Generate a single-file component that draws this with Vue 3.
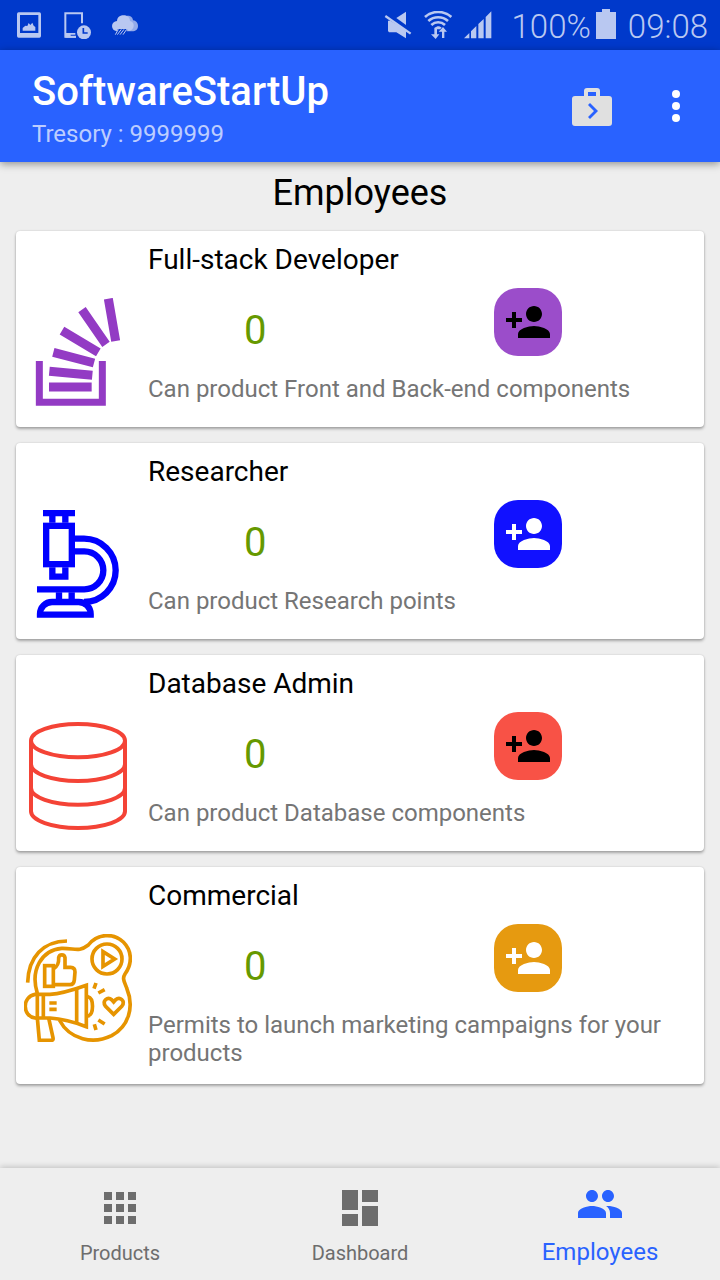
<template>
  <div class="screen">
    <div class="status-bar">
      <div class="status-group">
        <svg class="status-icon" viewBox="45 33 84 84" aria-hidden="true">
          <path fill-rule="evenodd" d="M56 37H118Q123 37 123 42V108Q123 113 118 113H56Q51 113 51 108V42Q51 37 56 37ZM60 45V99H115V45Z" />
          <path d="M68 92V84L76 77L82 78L86 69L91 75L97 68L101 77L106 81V92Z" />
        </svg>
        <svg class="status-icon" viewBox="189 33 84 84" aria-hidden="true">
          <path d="M246 70V40H196V110H228" fill="none" stroke="currentColor" stroke-width="6" />
          <path d="M196 99H226V104H212V108H228V113H196Z" />
          <circle cx="252" cy="97" r="21" />
          <path class="cut" d="M250 84V99H263" stroke-width="5" />
        </svg>
        <svg class="status-icon" viewBox="333 33 84 84" aria-hidden="true">
          <path d="M378 48C390 44 399 52 399 61C408 62 414 69 414 78C414 88 407 94 396 94H380Z" opacity=".8" />
          <path d="M350 94C341 92 336 86 336 78C336 69 343 64 351 63C352 51 361 46 371 46C383 46 390 54 390 63C399 65 402 71 401 79C400 87 394 92 386 93L381 87H354Z" />
          <path d="M355 88L346 104M364 88L352 104M372 88L360 104M380 88L369 104" stroke="currentColor" stroke-width="3" />
        </svg>
      </div>
      <div class="status-group right">
        <svg class="status-icon" viewBox="39 33 84 84" aria-hidden="true">
          <path d="M76 54L105 35V75Z" />
          <path d="M51 62H58L105 90V115L76 97H54L51 93Z" />
          <path d="M43 48L119 101" stroke="currentColor" stroke-width="7" />
        </svg>
        <svg class="status-icon" viewBox="159 33 84 84" aria-hidden="true">
          <g fill="none" stroke="currentColor" stroke-width="8">
            <path d="M162 51C184 31 219 31 241 51" />
            <path d="M172 63C189 48 214 48 231 63" />
            <path d="M181 75C193 64 210 64 222 75" />
          </g>
          <path d="M192 83C198 77 206 77 212 83L207 88H197Z" />
          <path d="M190 83H198V103H205L194 117L180 103H190ZM213 114V95H203L216 81L228 95H220V114Z" />
        </svg>
        <svg class="status-icon" viewBox="279 33 84 84" aria-hidden="true">
          <path d="M279 115L295 99V115ZM300 94L316 78V115H300ZM322 72L338 57V115H322ZM344 51L361 34V115H344Z" />
        </svg>
        <span class="battery-text">100%</span>
        <svg class="battery" viewBox="672 27 60 90" aria-hidden="true">
          <path d="M690 27H714V36H732V117H672V36H690Z" />
        </svg>
        <span class="clock">09:08</span>
      </div>
    </div>

    <header class="app-bar">
      <div class="app-title">
        <h1>SoftwareStartUp</h1>
        <p>Tresory : {{ tresory }}</p>
      </div>
      <div class="actions">
        <button type="button" class="bag" aria-label="Next week">
          <svg viewBox="0 0 24 24">
            <path fill-rule="evenodd" d="M20.500 7H16V4.500Q16 3 14.500 3H9.500Q8 3 8 4.500V7H3.500Q2 7 2 8.500V20.500Q2 22 3.500 22H20.500Q22 22 22 20.500V8.500Q22 7 20.500 7ZM10 5H14V7H10ZM11 18.500L10 17.500 13 14.500 10 11.500 11 10.500 15 14.500Z" />
          </svg>
        </button>
        <button type="button" aria-label="More options">
          <svg viewBox="0 0 24 24">
            <circle cx="12" cy="6" r="2" />
            <circle cx="12" cy="12" r="2" />
            <circle cx="12" cy="18" r="2" />
          </svg>
        </button>
      </div>
    </header>

    <main>
      <h2>Employees</h2>
      <ul class="cards">
        <li v-for="item in employees" :key="item.id" class="card" :class="item.id">
          <svg v-if="item.id === 'developer'" class="picture" viewBox="42 54 324 324" aria-hidden="true">
            <path d="M88 243V367H277V243" stroke-width="21" />
            <path d="M117 321H245M118 274L247 286M130 217L252 249M156 152L265 217M216 89L288 193M295 56L317 183" stroke-width="27" />
          </svg>
          <svg v-else-if="item.id === 'researcher'" class="picture" viewBox="42 60 324 324" stroke-width="19" aria-hidden="true">
            <path d="M99 69H195M127 78V98M166 78V98" />
            <rect x="108.500" y="107.500" width="77" height="115" />
            <path d="M127 232V260H166V232" />
            <path d="M195 146H222A95 95 0 0 1 222 336" />
            <path d="M195 184H223A57 57 0 0 1 223 298H81" />
            <path d="M147 307V328M185 307V328" />
            <path d="M90 374V372A36 36 0 0 1 126 336H206A36 36 0 0 1 242 372V374Z" />
          </svg>
          <svg v-else-if="item.id === 'database'" class="picture" viewBox="42 66 324 324" stroke-width="12" aria-hidden="true">
            <ellipse cx="204" cy="122" rx="141" ry="50" />
            <path d="M63 122V334A141 50 0 0 0 345 334V122" />
            <path d="M63 193A141 50 0 0 0 345 193M63 264A141 50 0 0 0 345 264" />
          </svg>
          <svg v-else class="picture" viewBox="42 42 324 324" stroke-width="11" aria-hidden="true">
            <path d="M53 188C55 110 100 64 171 63" />
            <path d="M82 220C60 150 95 90 155 85C195 84 205 98 235 75C262 40 310 38 340 66C366 92 368 130 345 162C336 176 343 184 350 204C374 262 355 320 305 347C250 374 180 360 148 300" />
            <circle cx="291" cy="117" r="45" />
            <path d="M279 95V139L314 117Z" />
            <rect x="104" y="137" width="26" height="62" />
            <path d="M130 147C142 140 147 132 146 113C148 102 163 102 165 113V142H182C192 142 195 147 195 156L193 180C192 190 188 194 180 194H130" />
            <path d="M82 223H120C150 222 190 210 229 196V320C190 305 150 296 120 294H82Z" />
            <path d="M82 223H75C36 230 36 288 75 294H82M100 223V294M200 207V309" />
            <path d="M229 230H234C252 234 252 284 234 288H229" />
            <path d="M118 249H140M118 268H140" />
            <path d="M82 294L88 361H124C129 361 130 358 129 353L116 294" />
            <path d="M311 283L286 258C276 243 292 228 306 240L311 246L316 240C330 228 347 243 336 258Z" />
            <path d="M258 189L252 206M265 219L284 209M253 313L258 330M265 300L284 312" />
          </svg>

          <div class="details">
            <h3>{{ item.name }}</h3>
            <div class="hire-row">
              <span class="count">{{ item.count }}</span>
              <button type="button" class="hire" :aria-label="'Hire ' + item.name" @click="item.count++">
                <svg viewBox="0 0 24 24">
                  <path d="M15 12c2.210 0 4-1.790 4-4s-1.790-4-4-4-4 1.790-4 4 1.790 4 4 4zm-9-2V7H4v3H1v2h3v3h2v-3h3v-2H6zm9 4c-2.670 0-8 1.340-8 4v2h16v-2c0-2.660-5.330-4-8-4z" />
                </svg>
              </button>
            </div>
            <p>{{ item.description }}</p>
          </div>
        </li>
      </ul>
    </main>

    <nav class="bottom-nav">
      <a v-for="tab in tabs" :key="tab.label" href="#" :class="{ 'is-active': tab.label === activeTab }" @click.prevent="activeTab = tab.label">
        <svg viewBox="0 0 24 24" aria-hidden="true">
          <path :d="tab.icon" />
        </svg>
        <span>{{ tab.label }}</span>
      </a>
    </nav>
  </div>
</template>

<script setup>
import { ref } from 'vue';

const tresory = ref(9999999);

const employees = ref([
  { id: 'developer', name: 'Full-stack Developer', count: 0, description: 'Can product Front and Back-end components' },
  { id: 'researcher', name: 'Researcher', count: 0, description: 'Can product Research points' },
  { id: 'database', name: 'Database Admin', count: 0, description: 'Can product Database components' },
  { id: 'commercial', name: 'Commercial', count: 0, description: 'Permits to launch marketing campaigns for your products' }
]);

// BOTTOM NAVIGATION

const activeTab = ref('Employees');

const tabs = [
  { label: 'Products', icon: 'M4 8h4V4H4v4zm6 12h4v-4h-4v4zm-6 0h4v-4H4v4zm0-6h4v-4H4v4zm6 0h4v-4h-4v4zm6-10v4h4V4h-4zm-6 4h4V4h-4v4zm6 6h4v-4h-4v4zm0 6h4v-4h-4v4z' },
  { label: 'Dashboard', icon: 'M3 13h8V3H3v10zm0 8h8v-6H3v6zm10 0h8V11h-8v10zm0-18v6h8V3h-8z' },
  { label: 'Employees', icon: 'M16 11c1.660 0 2.990-1.340 2.990-3S17.660 5 16 5c-1.660 0-3 1.340-3 3s1.340 3 3 3zm-8 0c1.660 0 2.990-1.340 2.990-3S9.660 5 8 5C6.340 5 5 6.340 5 8s1.340 3 3 3zm0 2c-2.330 0-7 1.170-7 3.500V19h14v-2.500c0-2.330-4.670-3.500-7-3.500zm8 0c-.29 0-.62.02-.97.05 1.160.84 1.970 1.970 1.970 3.450V19h6v-2.500c0-2.330-4.670-3.500-7-3.500z' }
];
</script>

<style>
body {
  margin: 0;
  background: #eeeeee;
}
</style>

<style scoped>
.screen {
  display: flex;
  flex-direction: column;
  min-height: 100vh;
  background: #eeeeee;
  color: #000;
  font-family: Roboto, "Liberation Sans", sans-serif;
}

h1, h2, h3, p, ul {
  margin: 0;
  padding: 0;
  font-weight: 400;
}

svg {
  display: block;
  flex-shrink: 0;
  fill: currentColor;
}

button {
  padding: 0;
  border: none;
  background: none;
  color: inherit;
  cursor: pointer;
}

/* status bar */
.status-bar {
  display: flex;
  justify-content: space-between;
  align-items: center;
  height: 50px;
  padding: 0 12px 0 15px;
  background: #0039cb;
  color: #b9c8f1;
}

.status-group {
  display: flex;
  align-items: center;
  gap: 20px;
}

.status-group.right {
  gap: 12px;
}

.status-icon {
  width: 28px;
  height: 28px;
}

.cut {
  fill: none;
  stroke: #0039cb;
}

.battery-text,
.clock {
  padding-top: 3px;
  font-size: 33px;
  font-weight: 300;
  line-height: 40px;
}

.battery-text {
  margin-left: 8px;
}

.battery {
  width: 20px;
  height: 30px;
  margin: 0 0 2px -7px;
}

/* app bar */
.app-bar {
  display: flex;
  justify-content: space-between;
  align-items: center;
  min-height: 112px;
  padding: 0 20px 0 32px;
  box-sizing: border-box;
  background: #2962ff;
  color: #fff;
  box-shadow: 0 2px 8px rgba(0, 0, 0, .4);
}

.app-title {
  padding-top: 4px;
}

.app-title h1 {
  font-size: 40px;
  font-weight: 500;
  line-height: 48px;
}

.app-title p {
  padding-top: 4px;
  font-size: 24px;
  line-height: 28px;
  color: rgba(255, 255, 255, .7);
}

.actions {
  display: flex;
  gap: 36px;
}

.actions svg {
  width: 48px;
  height: 48px;
}

.bag {
  color: #e0e0e0;
}

/* employees */
main {
  flex: 1;
  padding: 10px 16px 24px;
}

h2 {
  font-size: 36px;
  line-height: 42px;
  text-align: center;
}

.cards {
  display: flex;
  flex-direction: column;
  gap: 16px;
  margin-top: 17px;
  list-style: none;
}

.card {
  display: flex;
  align-items: flex-start;
  gap: 16px;
  min-height: 196px;
  padding: 12px 10px 17px 8px;
  box-sizing: border-box;
  border-radius: 4px;
  background: #fff;
  box-shadow: 0 2px 3px rgba(0, 0, 0, .3), 0 0 2px rgba(0, 0, 0, .15);
}

.picture {
  width: 108px;
  height: 108px;
  margin-top: 55px;
  fill: none;
  stroke: currentColor;
}

.details {
  flex: 1;
}

h3 {
  font-size: 28px;
  line-height: 33px;
}

.hire-row {
  display: grid;
  grid-template-columns: 11fr 17fr;
  align-items: end;
  justify-items: center;
  padding: 12px 0 19px;
}

.count {
  font-size: 40px;
  line-height: 50px;
  color: #669900;
}

.hire {
  display: flex;
  justify-content: center;
  align-items: center;
  width: 68px;
  height: 68px;
  border-radius: 24px;
  color: #fff;
}

.hire svg {
  width: 48px;
  height: 48px;
}

.details p {
  font-size: 24px;
  line-height: 28px;
  color: #757575;
}

.developer .picture { color: #933bc4; }
.developer .hire { background: #9b4dca; color: #000; }
.researcher .picture { color: #0000ff; }
.researcher .hire { background: #1111ff; }
.database .picture { color: #f44336; }
.database .hire { background: #f85246; color: #000; }
.commercial .picture { color: #e69400; }
.commercial .hire { background: #e69a10; }

/* bottom navigation */
.bottom-nav {
  position: sticky;
  bottom: 0;
  display: flex;
  height: 112px;
  background: #eeeeee;
  box-shadow: 0 -1px 6px rgba(0, 0, 0, .2);
}

.bottom-nav a {
  display: flex;
  flex: 1;
  flex-direction: column;
  justify-content: space-between;
  align-items: center;
  padding: 16px 0 13px;
  box-sizing: border-box;
  font-size: 20px;
  line-height: 28px;
  color: #6d6d6d;
  text-decoration: none;
}

.bottom-nav svg {
  width: 48px;
  height: 48px;
}

.bottom-nav .is-active {
  padding: 12px 0 14px;
  font-size: 24px;
  color: #2962ff;
}
</style>
